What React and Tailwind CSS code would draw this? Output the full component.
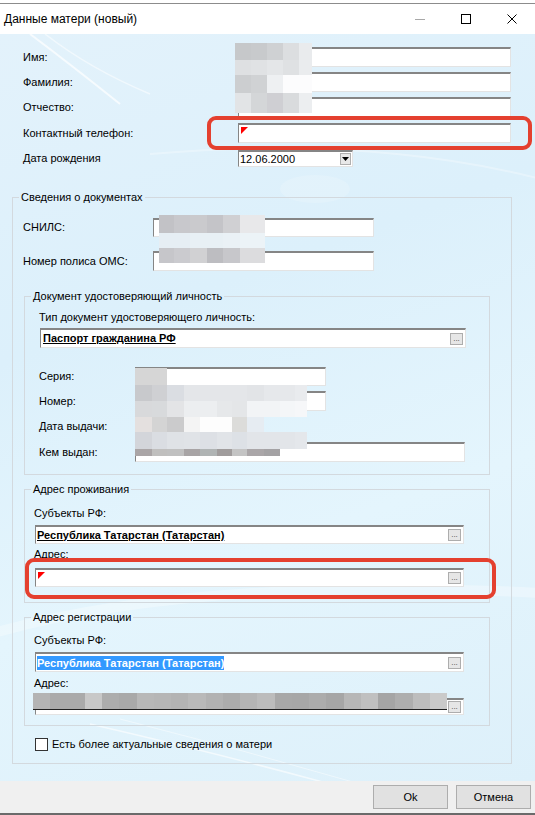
import React from "react";

// поле ввода в стиле WinForms (утопленная рамка)
const sunken =
  "bg-white border-t-2 border-l border-r border-b border-t-[#858585] border-l-[#858585] border-r-[#e3e3e3] border-b-[#e3e3e3]";

const EllipsisBtn = () => (
  <div className="w-[13px] h-[12px] shrink-0 bg-[#e6e6e6] border border-[#adadad] flex items-end justify-center text-[8px] leading-[8px] text-[#444] pb-[1px]">
    ...
  </div>
);

const Flag = () => (
  <svg className="absolute left-[2px] top-[2px]" width="7" height="7" viewBox="0 0 7 7">
    <polygon points="0,0 7,0 0,7" fill="#ff0000" />
  </svg>
);

const Pixels = ({ className, widths, heights, colors }) => (
  <div className={"absolute flex flex-col " + className}>
    {heights.map((h, r) => (
      <div key={r} className="flex">
        {widths.map((w, c) => (
          <div key={c} style={{ width: w, height: h, background: colors[r][c] || "transparent" }} />
        ))}
      </div>
    ))}
  </div>
);

const regGrays = [
  "#b4b4b4", "#aaaaaa", "#aaaaaa", "#c8c8c8", "#adadad", "#a9a9a9", "#b8b8b8", "#b6b6b6",
  "#b3b3b3", "#b9b9b9", "#b2b2b2", "#acacac", "#b5b5b5", "#bcbcbc", "#a8a8a8", "#a7a7a7",
  "#acacac", "#a6a6a6", "#b7b7b7", "#c0c0c0", "#a5a5a5", "#aeaeae", "#bdbdbd", "#cacaca",
];

export default function App() {
  return (
    <div className="relative w-[535px] h-[815px] overflow-hidden bg-white pt-[3px] text-[11px] text-black font-['Liberation_Sans',Arial,sans-serif]">
      {/* Title bar */}
      <div className="h-[31px] border-t border-[#8c8c8c] flex items-center bg-white">
        <span className="pl-[4px] text-[12px]">Данные матери (новый)</span>
        <div className="ml-auto flex h-full">
          <div className="w-[46px] flex items-center justify-center">
            <div className="w-[10px] h-px bg-[#a8a8a8]" />
          </div>
          <div className="w-[46px] flex items-center justify-center">
            <div className="w-[10px] h-[10px] border border-black" />
          </div>
          <div className="w-[46px] flex items-center justify-center">
            <svg width="10" height="10" viewBox="0 0 10 10">
              <path d="M0.5 0.5 L9.5 9.5 M9.5 0.5 L0.5 9.5" stroke="#000" strokeWidth="1" />
            </svg>
          </div>
        </div>
      </div>

      {/* Content */}
      <div className="relative h-[747px] bg-[linear-gradient(160deg,#e3f2fb_0%,#dcf0fb_35%,#e4f5fd_65%,#ddf0fa_100%)]">
        <svg className="absolute inset-0 pointer-events-none" width="535" height="747">
          <path d="M30 0 Q 70 30 120 70" stroke="#fff" strokeOpacity="0.7" strokeWidth="2" fill="none" />
          <path d="M45 0 Q 90 35 150 60" stroke="#fff" strokeOpacity="0.5" strokeWidth="1.5" fill="none" />
          <path d="M-10 600 Q 200 540 560 560" stroke="#fff" strokeOpacity="0.3" strokeWidth="10" fill="none" />
          <path d="M90 690 Q 220 720 330 750" stroke="#fff" strokeOpacity="0.6" strokeWidth="1.5" fill="none" />
          <path d="M120 685 Q 240 715 360 750" stroke="#fff" strokeOpacity="0.45" strokeWidth="1" fill="none" />
          <ellipse cx="315" cy="155" rx="35" ry="14" fill="#fff" fillOpacity="0.15" />
          <path d="M150 120 Q 380 100 560 150" stroke="#fff" strokeOpacity="0.3" strokeWidth="2" fill="none" />
        </svg>

        <div className="relative pt-[13px] pl-[23px]">
          {[
            ["Имя:", "mt-0"],
            ["Фамилия:", "mt-[5px]"],
            ["Отчество:", "mt-[5px]"],
          ].map(([label, mt]) => (
            <div key={label} className={"flex items-center h-[20px] " + mt}>
              <span className="w-[215px]">{label}</span>
              <div className={"w-[273px] h-[20px] " + sunken} />
            </div>
          ))}
          <div className="flex items-center h-[20px] mt-[6px]">
            <span className="w-[215px]">Контактный телефон:</span>
            <div className={"relative w-[273px] h-[20px] " + sunken}>
              <Flag />
            </div>
          </div>
          <div className="flex items-center h-[17px] mt-[7px]">
            <span className="w-[215px]">Дата рождения</span>
            <div className={"w-[115px] h-[17px] flex items-center justify-between pl-[1px] pr-[1px] " + sunken}>
              <span className="leading-[13px]">12.06.2000</span>
              <div className="w-[11px] h-[12px] bg-[#e8e8e8] border border-[#b0b0b0] flex items-center justify-center">
                <svg width="7" height="4" viewBox="0 0 7 4">
                  <polygon points="0,0 7,0 3.5,4" fill="#000" />
                </svg>
              </div>
            </div>
          </div>
        </div>

        {/* Сведения о документах */}
        <fieldset className="relative mt-[24px] ml-[12px] w-[500px] border border-[#d3d9de] pb-[10px]">
          <legend className="ml-[6px] px-[2px] leading-[13px]">Сведения о документах</legend>

          <div className="pl-[10px] mt-[14px] flex items-center h-[19px]">
            <span className="w-[130px]">СНИЛС:</span>
            <div className={"w-[221px] h-[19px] " + sunken} />
          </div>
          <div className="pl-[10px] mt-[14px] flex items-center h-[20px]">
            <span className="w-[130px]">Номер полиса ОМС:</span>
            <div className={"w-[221px] h-[20px] " + sunken} />
          </div>

          {/* Документ удостоверяющий личность */}
          <fieldset className="mt-[19px] ml-[11px] w-[466px] border border-[#d3d9de] pb-[12px]">
            <legend className="ml-[6px] px-[2px] leading-[13px]">Документ удостоверяющий личность</legend>
            <div className="pl-[14px] mt-[8px] leading-[13px]">Тип документ удостоверяющего личность:</div>
            <div className={"ml-[15px] mt-[4px] w-[426px] h-[20px] flex items-center justify-between pl-[2px] pr-[2px] " + sunken}>
              <span className="font-bold underline leading-[13px]">Паспорт гражданина РФ</span>
              <EllipsisBtn />
            </div>
            <div className="pl-[14px] mt-[19px] flex items-center h-[19px]">
              <span className="w-[96px]">Серия:</span>
              <div className={"w-[191px] h-[19px] " + sunken} />
            </div>
            <div className="pl-[14px] mt-[5px] flex items-center h-[20px]">
              <span className="w-[96px]">Номер:</span>
              <div className={"w-[191px] h-[20px] " + sunken} />
            </div>
            <div className="pl-[14px] mt-[5px] flex items-center h-[20px]">
              <span className="w-[96px]">Дата выдачи:</span>
              <div className={"w-[115px] h-[20px] " + sunken} />
            </div>
            <div className="pl-[14px] mt-[6px] flex items-center h-[20px]">
              <span className="w-[96px]">Кем выдан:</span>
              <div className={"w-[330px] h-[20px] " + sunken} />
            </div>
          </fieldset>

          {/* Адрес проживания */}
          <fieldset className="mt-[8px] ml-[11px] w-[466px] border border-[#d3d9de] pb-[15px]">
            <legend className="ml-[6px] px-[2px] leading-[13px]">Адрес проживания</legend>
            <div className="pl-[9px] mt-[11px] leading-[13px]">Субъекты РФ:</div>
            <div className={"ml-[10px] mt-[5px] w-[429px] h-[19px] flex items-center justify-between pl-[1px] pr-[2px] " + sunken}>
              <span className="font-bold underline leading-[13px]">Республика Татарстан (Татарстан)</span>
              <EllipsisBtn />
            </div>
            <div className="pl-[9px] mt-[4px] leading-[13px]">Адрес:</div>
            <div className={"relative ml-[10px] mt-[7px] w-[429px] h-[19px] flex items-center justify-end pr-[2px] " + sunken}>
              <Flag />
              <EllipsisBtn />
            </div>
          </fieldset>

          {/* Адрес регистрации */}
          <fieldset className="mt-[8px] ml-[11px] w-[466px] border border-[#d3d9de] pb-[10px]">
            <legend className="ml-[6px] px-[2px] leading-[13px]">Адрес регистрации</legend>
            <div className="pl-[9px] mt-[10px] leading-[13px]">Субъекты РФ:</div>
            <div className={"ml-[10px] mt-[5px] w-[429px] h-[20px] flex items-center justify-between pl-[1px] pr-[2px] " + sunken}>
              <span className="font-bold bg-[#3399ff] text-white leading-[14px]">Республика Татарстан (Татарстан)</span>
              <EllipsisBtn />
            </div>
            <div className="pl-[9px] mt-[5px] leading-[13px]">Адрес:</div>
            <div className={"ml-[10px] mt-[8px] w-[429px] h-[17px] flex items-center justify-end pr-[2px] " + sunken}>
              <EllipsisBtn />
            </div>
          </fieldset>

          <div className="mt-[10px] ml-[22px] flex items-center gap-[4px]">
            <div className="w-[13px] h-[13px] border border-[#333] bg-white" />
            <span>Есть более актуальные сведения о матери</span>
          </div>
        </fieldset>
      </div>

      {/* Bottom bar */}
      <div className="h-[32px] bg-[#f0f0f0] flex items-start justify-end pt-[4px] pr-[4px] gap-[8px]">
        <button className="w-[75px] h-[24px] bg-[#e1e1e1] border border-[#adadad] text-[11px]">Ok</button>
        <button className="w-[75px] h-[24px] bg-[#e1e1e1] border border-[#adadad] text-[11px]">Отмена</button>
      </div>
      <div className="h-[2px] bg-[#6a6a6a]" />

      {/* Размытые (скрытые) данные */}
      <Pixels
        className="left-[235px] top-[43px]"
        widths={[16, 16, 16, 16, 13]}
        heights={[17, 15, 18, 20]}
        colors={[
          ["#c6c8ca", "#c8cacc", "#cfd1d3", "#dcdee0", "#e9ebed"],
          ["#dee0e2", "#e0e2e4", "#e4e6e8", "#dfe1e3", "#eaecee"],
          ["#ccced0", "#d0d2d4", "#eef0f2", "#fcfcfd", "#fcfcfd"],
          ["#e2e4e6", "#d4d6d8", "#cfcfd3", "#d9dbdd", "#eceef0"],
        ]}
      />
      <Pixels
        className="left-[159px] top-[215px]"
        widths={[15, 16, 17, 16, 17, 25]}
        heights={[18, 15, 15]}
        colors={[
          ["#c2c2c6", "#c8c8cc", "#cacacd", "#c4c4c8", "#d0d0d3", "#e8e8ea"],
          ["#e6eef4", "#e6eef4", "#e8f0f5", "#e8f0f5", "#eaf1f6", "#ecf3f7"],
          ["#c6c6ca", "#cbcbcf", "#d1d1d3", "#bdbdc1", "#c7c7cb", "#dcdcde"],
        ]}
      />
      <Pixels
        className="left-[135px] top-[368px]"
        widths={[17, 15, 17, 16, 17, 15, 15, 17, 16, 15, 12]}
        heights={[17, 16, 16, 15, 17, 7]}
        colors={[
          ["#d6d6d6", "#d6d6d6"],
          ["#c8c9cc", "#cfd0d3", "#dadde2", "#e4e6e9", "#e4e6e9", "#e4e6e9", "#e4e6e9", "#e2e4e7", "#e6e8eb", "#e6e8eb", "#e9ebee"],
          ["#d8d9db", "#d8dadc", "#e3e4e6", "#eceef0", "#eceef0", "#e6e8ea", "#e4e6e8", "#f2f4f6", "#f2f4f6", "#f4f6f8", "#f6f7f9"],
          ["#e4e0df", "#d4d4d4", "#cbcbcc", "#f4f4f4", "#fdfdfd", "#fdfdfd", "#dcdcda", "#e6ecf2"],
          ["#d3d5da", "#dadde2", "#dfe2e6", "#e0e3e7", "#dde0e5", "#e1e4e8", "#dde1e6", "#e2e5e9", "#e2e5e9", "#e2e5e9", "#e4e7eb"],
          ["#aaa5a6", "#c0bfbe", "#c0c0c0", "#a8a4a5", "#b0b4b4", "#a09c9c", "#c4c4c4", "#aaa6a8", "#a4a2a4"],
        ]}
      />
      <div className="absolute left-[33px] top-[693px] w-[414px] h-[17px] flex flex-col">
        <div className="flex h-[16px]">
          {regGrays.map((c, i) => (
            <div key={i} className="flex-1" style={{ background: c }} />
          ))}
        </div>
        <div className="h-px bg-[#222]" />
      </div>

      {/* Красные выделения */}
      <div className="absolute left-[207px] top-[116px] w-[325px] h-[34px] border-4 border-[#e4402f] rounded-[9px]" />
      <div className="absolute left-[25px] top-[558px] w-[471px] h-[41px] border-4 border-[#e4402f] rounded-[9px]" />
    </div>
  );
}
